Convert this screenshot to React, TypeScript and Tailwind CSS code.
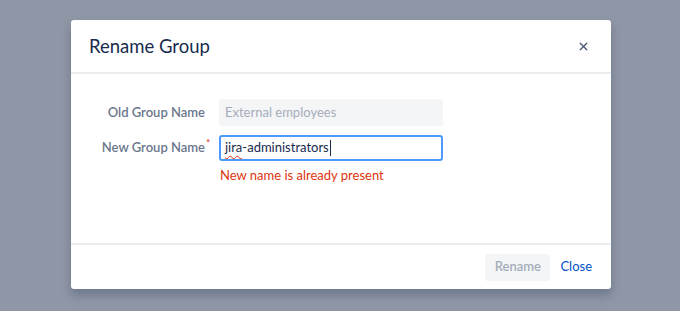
import { X } from "lucide-react";

export default function App() {
  return (
    <div className="h-[311px] w-[680px] overflow-hidden bg-[#8f96a5] pt-[20px] font-['Lato',sans-serif]">
      <div className="ml-[71px] w-[540px] rounded-[3px] bg-white shadow-[0_6px_10px_rgba(9,30,66,0.25)]">
        <header className="flex h-[54px] items-center justify-between border-b-2 border-[#ebecf0] pl-[18px] pr-[21px]">
          <h2 className="text-[18.5px] leading-none text-[#172b4d]">Rename Group</h2>
          <X className="h-[13px] w-[13px] text-[#42526e]" strokeWidth={2.4} />
        </header>

        <div className="h-[169px] pt-[25px]">
          <div className="flex items-center">
            <label className="w-[134px] text-right text-[13px] font-semibold text-[#6b778c]">Old Group Name</label>
            <div className="ml-[14px] flex h-[27px] w-[224px] items-center rounded-[3px] bg-[#f4f5f7] px-[6px] text-[13px] text-[#a5adba]">
              External employees
            </div>
          </div>

          <div className="mt-[9px] flex items-center">
            <label className="relative w-[134px] text-right text-[13px] font-semibold text-[#6b778c]">
              New Group Name
              <span className="absolute right-[-5px] top-[-2px] text-[9px] text-[#de350b]">*</span>
            </label>
            <div className="ml-[14px] flex h-[26px] w-[224px] items-center rounded-[3px] border-2 border-[#4c9aff] bg-white px-[4px] text-[13px] text-[#172b4d]">
              <span className="underline decoration-wavy decoration-[#de350b] decoration-1 underline-offset-[3px]">jira</span>
              <span>-administrators</span>
              <span className="ml-px h-[16px] w-px bg-[#172b4d]" />
            </div>
          </div>

          <p className="ml-[149px] mt-[5px] text-[13px] text-[#de350b]">New name is already present</p>
        </div>

        <footer className="flex h-[46px] items-center justify-end gap-[10px] border-t-2 border-[#ebecf0] pr-[19px]">
          <button type="button" className="h-[27px] w-[65px] rounded-[3px] bg-[#f4f5f7] text-[13px] font-semibold text-[#a5adba]">
            Rename
          </button>
          <button type="button" className="text-[13px] text-[#0052cc]">
            Close
          </button>
        </footer>
      </div>
    </div>
  );
}
